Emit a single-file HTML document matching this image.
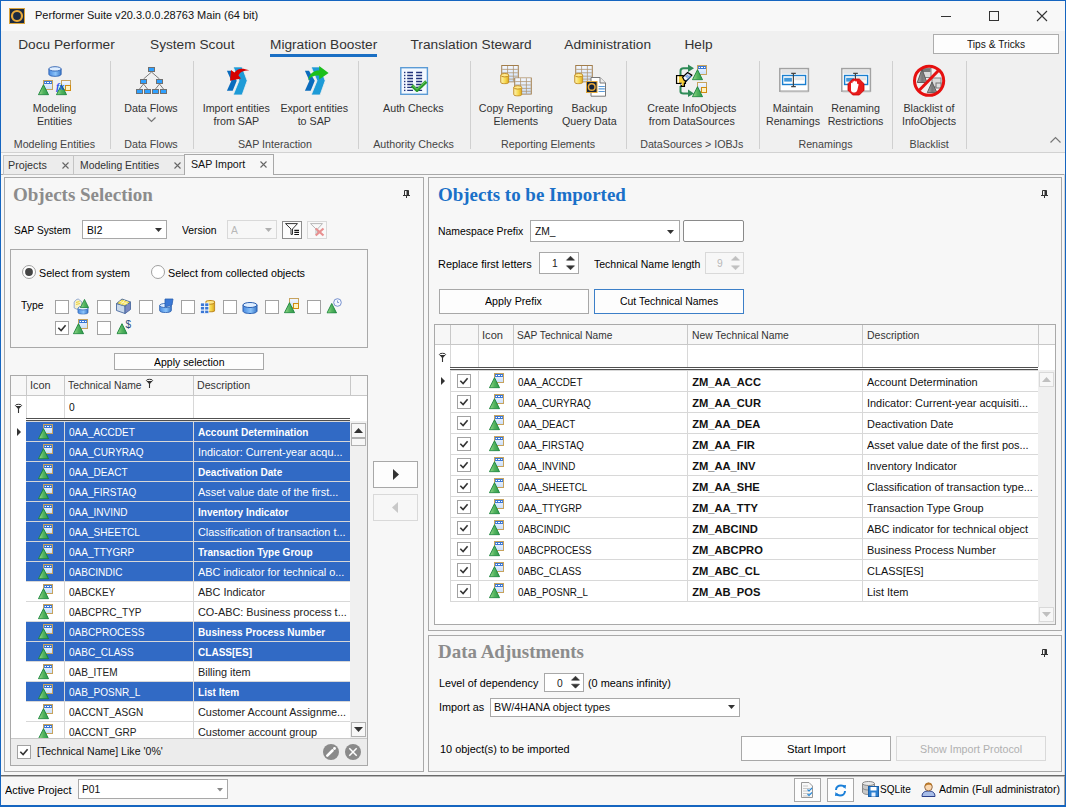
<!DOCTYPE html><html><head><meta charset="utf-8"><style>
*{margin:0;padding:0}
html,body{width:1066px;height:807px;overflow:hidden;background:#f7f7f7;position:relative}
.a{position:absolute}
.t{position:absolute;white-space:nowrap;line-height:1;font-family:"Liberation Sans",sans-serif}
svg{overflow:visible}
</style></head><body>
<svg width="0" height="0" style="position:absolute"><defs>
<linearGradient id="gG" x1="0" x2="1" y1="0" y2="0"><stop offset="0" stop-color="#9ddc8f"/><stop offset="0.5" stop-color="#52b35e"/><stop offset="1" stop-color="#2f9a4a"/></linearGradient>
<linearGradient id="gY" x1="0" x2="1"><stop offset="0" stop-color="#fff6b8"/><stop offset="0.6" stop-color="#f5d64a"/><stop offset="1" stop-color="#d9a520"/></linearGradient>
<linearGradient id="gB" x1="0" x2="1"><stop offset="0" stop-color="#4a8be0"/><stop offset="0.55" stop-color="#8cc4fa"/><stop offset="1" stop-color="#3a78c8"/></linearGradient>
<linearGradient id="gGr" x1="0" x2="1"><stop offset="0" stop-color="#b0b0b0"/><stop offset="0.5" stop-color="#6a6a6a"/><stop offset="1" stop-color="#8a8a8a"/></linearGradient>
<linearGradient id="gCell" x1="0" y1="0" x2="0" y2="1"><stop offset="0" stop-color="#f4f8ff"/><stop offset="1" stop-color="#c9defa"/></linearGradient>
<symbol id="tri" viewBox="0 0 12 12"><path d="M0.5 11.5L6 0.5L11.5 11.5Z" fill="url(#gG)" stroke="#17823a" stroke-width="1" stroke-linejoin="round"/></symbol>
<symbol id="rowi" viewBox="0 0 16 16"><rect x="5.5" y="0.5" width="9" height="9" fill="url(#gCell)" stroke="#c7a35e"/><rect x="6" y="1" width="8" height="3" fill="#3b78d6"/><path d="M6.8 2.5h1.2M9 2.5h2M12 2.5h1.2" stroke="#fff" stroke-width="1.1"/><use href="#tri" x="0" y="4" width="11" height="11.5"/></symbol>
<symbol id="rowo" viewBox="0 0 16 16"><rect x="5.5" y="0.5" width="9" height="9" fill="url(#gCell)" stroke="#c7a35e"/><rect x="9.5" y="5.5" width="5" height="5" fill="#fff2c0" stroke="#d08c10"/><use href="#tri" x="0" y="4" width="11" height="11.5"/></symbol>
<symbol id="cylb" viewBox="0 0 16 12"><path d="M1 3V9C1 10.7 4.4 11.5 8 11.5C11.6 11.5 15 10.7 15 9V3" fill="url(#gB)" stroke="#2a5fb0"/><ellipse cx="8" cy="3" rx="7" ry="2.5" fill="#dfeeff" stroke="#2a5fb0"/></symbol>
<symbol id="cyly" viewBox="0 0 10 12"><path d="M0.8 2.5V10C0.8 11 2.8 11.5 5 11.5C7.2 11.5 9.2 11 9.2 10V2.5" fill="url(#gY)" stroke="#c08a20"/><ellipse cx="5" cy="2.5" rx="4.2" ry="1.8" fill="#ffe98a" stroke="#c08a20"/></symbol>
<symbol id="tbl" viewBox="0 0 18 18"><rect x="0.5" y="0.5" width="17" height="17" fill="url(#gCell)" stroke="#a07a45"/><path d="M6.5 1V17M12.5 1V17M1 4.5H17M1 8H17M1 11.5H17M1 14.5H17" stroke="#b09670" stroke-width="0.8"/></symbol>
<symbol id="tblcyl" viewBox="0 0 20 20"><use href="#tbl" x="1" y="0" width="18" height="17.5"/><use href="#cyly" x="0" y="7.5" width="9.5" height="12"/></symbol>
<symbol id="sap" viewBox="0 0 40 36"><path d="M8.9 8.7L13 8.7L18.75 18.75L14.7 28.8L8.9 28.8L13.4 18.75Z" fill="#0b6cbd"/><path d="M15.2 4.9L24.1 4.9L29.2 18.75L24.1 33L15.2 33L21 18.75Z" fill="#1e9bd7" stroke="#f0f0f0" stroke-width="0.8"/></symbol>
</defs></svg>
<div class="a" style="left:0px;top:0px;width:1066px;height:807px;background:#f7f7f7;"></div>
<div class="a" style="left:1px;top:1px;width:1064px;height:30px;background:#f8f8f8;"></div>
<svg class="a" style="left:9px;top:8px;" width="16" height="16" viewBox="0 0 16 16"><rect x="0.5" y="0.5" width="15" height="15" fill="#1b2a40" stroke="#d8a23a"/><circle cx="8" cy="8" r="5" fill="none" stroke="#e8a93a" stroke-width="2.2"/><rect x="6" y="6" width="4" height="4" fill="#1b2a40"/></svg>
<div class="t" style="left:35.00px;top:10.14px;font-size:11.17px;color:#111;font-weight:normal;font-family:'Liberation Sans', sans-serif;transform:scaleX(0.9865);transform-origin:0 0;">Performer Suite v20.3.0.0.28763 Main (64 bit)</div>
<div class="a" style="left:941px;top:16px;width:10px;height:1px;background:#333;"></div>
<div class="a" style="left:989px;top:11px;width:10px;height:10px;border:1px solid #333;box-sizing:border-box;"></div>
<svg class="a" style="left:1037px;top:11px;" width="10" height="10" viewBox="0 0 10 10"><path d="M0 0L10 10M10 0L0 10" stroke="#333" stroke-width="1.1"/></svg>
<div class="a" style="left:1px;top:31px;width:1064px;height:121px;background:#f0f0f0;"></div>
<div class="t" style="left:18.20px;top:38.20px;font-size:13.70px;color:#333;font-weight:normal;font-family:'Liberation Sans', sans-serif;">Docu Performer</div>
<div class="t" style="left:150.00px;top:38.20px;font-size:13.70px;color:#333;font-weight:normal;font-family:'Liberation Sans', sans-serif;">System Scout</div>
<div class="t" style="left:270.00px;top:38.20px;font-size:13.70px;color:#333;font-weight:normal;font-family:'Liberation Sans', sans-serif;">Migration Booster</div>
<div class="t" style="left:410.50px;top:38.20px;font-size:13.70px;color:#333;font-weight:normal;font-family:'Liberation Sans', sans-serif;">Translation Steward</div>
<div class="t" style="left:564.30px;top:38.20px;font-size:13.70px;color:#333;font-weight:normal;font-family:'Liberation Sans', sans-serif;">Administration</div>
<div class="t" style="left:684.40px;top:38.20px;font-size:13.70px;color:#333;font-weight:normal;font-family:'Liberation Sans', sans-serif;">Help</div>
<div class="a" style="left:270px;top:54px;width:107px;height:3px;background:#1a6fc4;"></div>
<div class="a" style="left:933px;top:34px;width:126px;height:20px;background:#fdfdfd;border:1px solid #adadad;box-sizing:border-box;"></div>
<div class="t" style="left:966.90px;top:38.54px;font-size:11.17px;color:#111;font-weight:normal;font-family:'Liberation Sans', sans-serif;transform:scaleX(0.9146);transform-origin:0 0;">Tips &amp; Tricks</div>
<div class="a" style="left:110px;top:61px;width:1px;height:88px;background:#d0d0d0;"></div>
<div class="a" style="left:193px;top:61px;width:1px;height:88px;background:#d0d0d0;"></div>
<div class="a" style="left:358px;top:61px;width:1px;height:88px;background:#d0d0d0;"></div>
<div class="a" style="left:470px;top:61px;width:1px;height:88px;background:#d0d0d0;"></div>
<div class="a" style="left:626px;top:61px;width:1px;height:88px;background:#d0d0d0;"></div>
<div class="a" style="left:759px;top:61px;width:1px;height:88px;background:#d0d0d0;"></div>
<div class="a" style="left:892px;top:61px;width:1px;height:88px;background:#d0d0d0;"></div>
<div class="a" style="left:966px;top:61px;width:1px;height:88px;background:#d0d0d0;"></div>
<div class="t" style="left:32.79px;top:103.14px;font-size:10.70px;color:#333;font-weight:normal;font-family:'Liberation Sans', sans-serif;">Modeling</div>
<div class="t" style="left:36.96px;top:116.14px;font-size:10.70px;color:#333;font-weight:normal;font-family:'Liberation Sans', sans-serif;">Entities</div>
<div class="t" style="left:124.24px;top:103.14px;font-size:10.70px;color:#333;font-weight:normal;font-family:'Liberation Sans', sans-serif;">Data Flows</div>
<div class="t" style="left:202.70px;top:103.14px;font-size:10.70px;color:#333;font-weight:normal;font-family:'Liberation Sans', sans-serif;">Import entities</div>
<div class="t" style="left:213.41px;top:116.14px;font-size:10.70px;color:#333;font-weight:normal;font-family:'Liberation Sans', sans-serif;">from SAP</div>
<div class="t" style="left:280.40px;top:103.14px;font-size:10.70px;color:#333;font-weight:normal;font-family:'Liberation Sans', sans-serif;">Export entities</div>
<div class="t" style="left:297.65px;top:116.14px;font-size:10.70px;color:#333;font-weight:normal;font-family:'Liberation Sans', sans-serif;">to SAP</div>
<div class="t" style="left:383.07px;top:103.14px;font-size:10.70px;color:#333;font-weight:normal;font-family:'Liberation Sans', sans-serif;">Auth Checks</div>
<div class="t" style="left:478.73px;top:103.14px;font-size:10.70px;color:#333;font-weight:normal;font-family:'Liberation Sans', sans-serif;">Copy Reporting</div>
<div class="t" style="left:493.60px;top:116.14px;font-size:10.70px;color:#333;font-weight:normal;font-family:'Liberation Sans', sans-serif;">Elements</div>
<div class="t" style="left:571.46px;top:103.14px;font-size:10.70px;color:#333;font-weight:normal;font-family:'Liberation Sans', sans-serif;">Backup</div>
<div class="t" style="left:561.95px;top:116.14px;font-size:10.70px;color:#333;font-weight:normal;font-family:'Liberation Sans', sans-serif;">Query Data</div>
<div class="t" style="left:647.20px;top:103.14px;font-size:10.70px;color:#333;font-weight:normal;font-family:'Liberation Sans', sans-serif;">Create InfoObjects</div>
<div class="t" style="left:648.69px;top:116.14px;font-size:10.70px;color:#333;font-weight:normal;font-family:'Liberation Sans', sans-serif;">from DataSources</div>
<div class="t" style="left:772.78px;top:103.14px;font-size:10.70px;color:#333;font-weight:normal;font-family:'Liberation Sans', sans-serif;">Maintain</div>
<div class="t" style="left:765.94px;top:116.14px;font-size:10.70px;color:#333;font-weight:normal;font-family:'Liberation Sans', sans-serif;">Renamings</div>
<div class="t" style="left:831.22px;top:103.14px;font-size:10.70px;color:#333;font-weight:normal;font-family:'Liberation Sans', sans-serif;">Renaming</div>
<div class="t" style="left:827.65px;top:116.14px;font-size:10.70px;color:#333;font-weight:normal;font-family:'Liberation Sans', sans-serif;">Restrictions</div>
<div class="t" style="left:903.43px;top:103.14px;font-size:10.70px;color:#333;font-weight:normal;font-family:'Liberation Sans', sans-serif;">Blacklist of</div>
<div class="t" style="left:901.94px;top:116.14px;font-size:10.70px;color:#333;font-weight:normal;font-family:'Liberation Sans', sans-serif;">InfoObjects</div>
<div class="t" style="left:13.76px;top:138.94px;font-size:10.70px;color:#444;font-weight:normal;font-family:'Liberation Sans', sans-serif;">Modeling Entities</div>
<div class="t" style="left:124.24px;top:138.94px;font-size:10.70px;color:#444;font-weight:normal;font-family:'Liberation Sans', sans-serif;">Data Flows</div>
<div class="t" style="left:237.93px;top:138.94px;font-size:10.70px;color:#444;font-weight:normal;font-family:'Liberation Sans', sans-serif;">SAP Interaction</div>
<div class="t" style="left:373.16px;top:138.94px;font-size:10.70px;color:#444;font-weight:normal;font-family:'Liberation Sans', sans-serif;">Authority Checks</div>
<div class="t" style="left:501.12px;top:138.94px;font-size:10.70px;color:#444;font-weight:normal;font-family:'Liberation Sans', sans-serif;">Reporting Elements</div>
<div class="t" style="left:640.21px;top:138.94px;font-size:10.70px;color:#444;font-weight:normal;font-family:'Liberation Sans', sans-serif;">DataSources &gt; IOBJs</div>
<div class="t" style="left:798.44px;top:138.94px;font-size:10.70px;color:#444;font-weight:normal;font-family:'Liberation Sans', sans-serif;">Renamings</div>
<div class="t" style="left:909.58px;top:138.94px;font-size:10.70px;color:#444;font-weight:normal;font-family:'Liberation Sans', sans-serif;">Blacklist</div>
<svg class="a" style="left:147px;top:117px;" width="9" height="5" viewBox="0 0 9 5"><path d="M0.5 0.5L4.5 4.5L8.5 0.5" fill="none" stroke="#777" stroke-width="1.2"/></svg>
<svg class="a" style="left:1050px;top:137px;" width="11" height="6" viewBox="0 0 11 6"><path d="M0.5 5.5L5.5 0.5L10.5 5.5" fill="none" stroke="#777" stroke-width="1.2"/></svg>
<div class="a" style="left:1px;top:152px;width:1064px;height:1px;background:#d2d2d2;"></div>
<div class="a" style="left:1px;top:174px;width:1064px;height:1px;background:#a8a8a8;"></div>
<div class="a" style="left:3px;top:155px;width:71px;height:20px;background:#ececec;border:1px solid #c4c4c4;box-sizing:border-box;"></div>
<div class="a" style="left:73px;top:155px;width:112px;height:20px;background:#ececec;border:1px solid #c4c4c4;box-sizing:border-box;"></div>
<div class="a" style="left:184px;top:154px;width:90px;height:21px;background:#f7f7f7;border:1px solid #a8a8a8;box-sizing:border-box;border-bottom:none;"></div>
<div class="t" style="left:8.40px;top:159.64px;font-size:11.17px;color:#333;font-weight:normal;font-family:'Liberation Sans', sans-serif;transform:scaleX(0.9638);transform-origin:0 0;">Projects</div>
<div class="t" style="left:79.70px;top:159.64px;font-size:11.17px;color:#333;font-weight:normal;font-family:'Liberation Sans', sans-serif;transform:scaleX(0.9320);transform-origin:0 0;">Modeling Entities</div>
<div class="t" style="left:191.40px;top:159.14px;font-size:11.17px;color:#111;font-weight:normal;font-family:'Liberation Sans', sans-serif;transform:scaleX(0.9539);transform-origin:0 0;">SAP Import</div>
<svg class="a" style="left:61.5px;top:161.5px;" width="7" height="7" viewBox="0 0 7 7"><path d="M0.5 0.5L6.5 6.5M6.5 0.5L0.5 6.5" stroke="#666" stroke-width="1.1"/></svg>
<svg class="a" style="left:173.5px;top:161.5px;" width="7" height="7" viewBox="0 0 7 7"><path d="M0.5 0.5L6.5 6.5M6.5 0.5L0.5 6.5" stroke="#666" stroke-width="1.1"/></svg>
<svg class="a" style="left:259.5px;top:161.0px;" width="7" height="7" viewBox="0 0 7 7"><path d="M0.5 0.5L6.5 6.5M6.5 0.5L0.5 6.5" stroke="#666" stroke-width="1.1"/></svg>
<div class="a" style="left:4px;top:177px;width:420px;height:595px;border:1px solid #a9a9a9;box-sizing:border-box;"></div>
<div class="t" style="left:13.40px;top:185.87px;font-size:18.78px;color:#8c8c8c;font-weight:bold;font-family:'Liberation Serif', serif;transform:scaleX(1.0130);transform-origin:0 0;">Objects Selection</div>
<svg class="a" style="left:403px;top:190px;" width="8" height="9" viewBox="0 0 8 9"><path d="M1.5 0.5H5.5V5.5H1.5Z" fill="none" stroke="#333" stroke-width="1"/><rect x="3.5" y="0.5" width="2" height="5" fill="#333"/><path d="M0 5.5H7M3.5 5.5V8" stroke="#333" stroke-width="1"/></svg>
<div class="t" style="left:14.40px;top:224.54px;font-size:11.17px;color:#000;font-weight:normal;font-family:'Liberation Sans', sans-serif;transform:scaleX(0.9086);transform-origin:0 0;">SAP System</div>
<div class="a" style="left:82px;top:220px;width:85px;height:19px;background:#fff;border:1px solid #a8a8a8;box-sizing:border-box;"></div>
<div class="t" style="left:86.50px;top:224.54px;font-size:11.17px;color:#000;font-weight:normal;font-family:'Liberation Sans', sans-serif;transform:scaleX(0.9200);transform-origin:0 0;">BI2</div>
<svg class="a" style="left:154.5px;top:228px;" width="7" height="4" viewBox="0 0 7 4"><path d="M0 0H7L3.5 4Z" fill="#333"/></svg>
<div class="t" style="left:181.50px;top:224.54px;font-size:11.17px;color:#000;font-weight:normal;font-family:'Liberation Sans', sans-serif;transform:scaleX(0.9285);transform-origin:0 0;">Version</div>
<div class="a" style="left:227px;top:220px;width:50px;height:19px;background:#f7f7f7;border:1px solid #d9d9d9;box-sizing:border-box;"></div>
<div class="t" style="left:231.00px;top:224.54px;font-size:11.17px;color:#b8b8b8;font-weight:normal;font-family:'Liberation Sans', sans-serif;transform:scaleX(0.9200);transform-origin:0 0;">A</div>
<svg class="a" style="left:264.5px;top:228px;" width="7" height="4" viewBox="0 0 7 4"><path d="M0 0H7L3.5 4Z" fill="#b0b0b0"/></svg>
<div class="a" style="left:282px;top:221px;width:20px;height:18px;background:#fdfdfd;border:1px solid #8c8c8c;box-sizing:border-box;"></div>
<svg class="a" style="left:282px;top:221px;" width="20" height="18" viewBox="0 0 20 18"><path d="M3.5 2.6H15.5L10.5 8V13.4H9V8Z" fill="none" stroke="#333" stroke-width="1"/><path d="M12.3 9.4H17M12.3 11.4H17M12.3 13.5H17" stroke="#111" stroke-width="1.1"/></svg>
<div class="a" style="left:307px;top:221px;width:20px;height:18px;background:#f9f9f9;border:1px solid #d9d9d9;box-sizing:border-box;"></div>
<svg class="a" style="left:307px;top:221px;" width="20" height="18" viewBox="0 0 20 18"><path d="M3.5 2.6H15.5L10.5 8V13.4H9V8Z" fill="none" stroke="#b8b8b8" stroke-width="1"/><path d="M8.7 7.5L16.5 14.5M16.5 7.5L8.7 14.5" stroke="#e89090" stroke-width="2.2"/></svg>
<div class="a" style="left:10px;top:249px;width:358px;height:99px;border:1px solid #a9a9a9;box-sizing:border-box;"></div>
<svg class="a" style="left:22px;top:265px;" width="14" height="14" viewBox="0 0 14 14"><circle cx="7" cy="7" r="6.5" fill="#fff" stroke="#a0a0a0"/><circle cx="7" cy="7" r="3.9" fill="#444"/></svg>
<div class="t" style="left:39.20px;top:267.54px;font-size:11.17px;color:#000;font-weight:normal;font-family:'Liberation Sans', sans-serif;transform:scaleX(0.9580);transform-origin:0 0;">Select from system</div>
<svg class="a" style="left:151px;top:265px;" width="14" height="14" viewBox="0 0 14 14"><circle cx="7" cy="7" r="6.5" fill="#fff" stroke="#a0a0a0"/></svg>
<div class="t" style="left:168.30px;top:267.54px;font-size:11.17px;color:#000;font-weight:normal;font-family:'Liberation Sans', sans-serif;transform:scaleX(0.9648);transform-origin:0 0;">Select from collected objects</div>
<div class="t" style="left:21.40px;top:300.04px;font-size:11.17px;color:#000;font-weight:normal;font-family:'Liberation Sans', sans-serif;transform:scaleX(0.9300);transform-origin:0 0;">Type</div>
<svg class="a" style="left:55px;top:300px;" width="14" height="14" viewBox="0 0 14 14"><rect x="0.5" y="0.5" width="13" height="13" fill="#fff" stroke="#a2a2a2"/></svg>
<svg class="a" style="left:97px;top:300px;" width="14" height="14" viewBox="0 0 14 14"><rect x="0.5" y="0.5" width="13" height="13" fill="#fff" stroke="#a2a2a2"/></svg>
<svg class="a" style="left:139px;top:300px;" width="14" height="14" viewBox="0 0 14 14"><rect x="0.5" y="0.5" width="13" height="13" fill="#fff" stroke="#a2a2a2"/></svg>
<svg class="a" style="left:181px;top:300px;" width="14" height="14" viewBox="0 0 14 14"><rect x="0.5" y="0.5" width="13" height="13" fill="#fff" stroke="#a2a2a2"/></svg>
<svg class="a" style="left:223px;top:300px;" width="14" height="14" viewBox="0 0 14 14"><rect x="0.5" y="0.5" width="13" height="13" fill="#fff" stroke="#a2a2a2"/></svg>
<svg class="a" style="left:265px;top:300px;" width="14" height="14" viewBox="0 0 14 14"><rect x="0.5" y="0.5" width="13" height="13" fill="#fff" stroke="#a2a2a2"/></svg>
<svg class="a" style="left:307px;top:300px;" width="14" height="14" viewBox="0 0 14 14"><rect x="0.5" y="0.5" width="13" height="13" fill="#fff" stroke="#a2a2a2"/></svg>
<svg class="a" style="left:55px;top:321px;" width="14" height="14" viewBox="0 0 14 14"><rect x="0.5" y="0.5" width="13" height="13" fill="#fff" stroke="#a2a2a2"/><path d="M3.3 6.8L6.1 9.6L10.6 4.2" fill="none" stroke="#333" stroke-width="1.6"/></svg>
<svg class="a" style="left:97px;top:321px;" width="14" height="14" viewBox="0 0 14 14"><rect x="0.5" y="0.5" width="13" height="13" fill="#fff" stroke="#a2a2a2"/></svg>
<div class="a" style="left:114px;top:353px;width:150px;height:17px;background:#fdfdfd;border:1px solid #a8a8a8;box-sizing:border-box;"></div>
<div class="t" style="left:153.70px;top:356.54px;font-size:11.17px;color:#000;font-weight:normal;font-family:'Liberation Sans', sans-serif;transform:scaleX(0.9395);transform-origin:0 0;">Apply selection</div>
<div class="a" style="left:10px;top:375px;width:358px;height:391px;background:#fff;border:1px solid #a9a9a9;box-sizing:border-box;"></div>
<div class="a" style="left:11px;top:376px;width:356px;height:19px;background:#f7f7f7;"></div>
<div class="a" style="left:11px;top:395px;width:356px;height:1px;background:#c8c8c8;"></div>
<div class="a" style="left:26px;top:376px;width:1px;height:19px;background:#c8c8c8;"></div>
<div class="a" style="left:64px;top:376px;width:1px;height:19px;background:#c8c8c8;"></div>
<div class="a" style="left:193px;top:376px;width:1px;height:19px;background:#c8c8c8;"></div>
<div class="a" style="left:350px;top:376px;width:1px;height:19px;background:#c8c8c8;"></div>
<div class="a" style="left:26px;top:396px;width:1px;height:22px;background:#d8d8d8;"></div>
<div class="a" style="left:64px;top:396px;width:1px;height:22px;background:#d8d8d8;"></div>
<div class="a" style="left:193px;top:396px;width:1px;height:22px;background:#d8d8d8;"></div>
<div class="t" style="left:30.30px;top:380.24px;font-size:11.17px;color:#333;font-weight:normal;font-family:'Liberation Sans', sans-serif;transform:scaleX(0.9802);transform-origin:0 0;">Icon</div>
<div class="t" style="left:68.40px;top:380.24px;font-size:11.17px;color:#333;font-weight:normal;font-family:'Liberation Sans', sans-serif;transform:scaleX(0.9260);transform-origin:0 0;">Technical Name</div>
<div class="t" style="left:196.80px;top:380.24px;font-size:11.17px;color:#333;font-weight:normal;font-family:'Liberation Sans', sans-serif;transform:scaleX(0.9520);transform-origin:0 0;">Description</div>
<svg class="a" style="left:146px;top:379px;" width="7" height="9" viewBox="0 0 7 9"><ellipse cx="3.5" cy="1.5" rx="3.1" ry="1.2" fill="none" stroke="#333" stroke-width="1"/><path d="M0.6 2L3.5 5.5L6.4 2Z" fill="#333"/><path d="M3.5 5V9" stroke="#333" stroke-width="1.1"/></svg>
<svg class="a" style="left:15px;top:404px;" width="7" height="9" viewBox="0 0 7 9"><ellipse cx="3.5" cy="1.5" rx="3.1" ry="1.2" fill="none" stroke="#333" stroke-width="1"/><path d="M0.6 2L3.5 5.5L6.4 2Z" fill="#333"/><path d="M3.5 5V9" stroke="#333" stroke-width="1.1"/></svg>
<div class="t" style="left:69.00px;top:401.54px;font-size:11.17px;color:#111;font-weight:normal;font-family:'Liberation Sans', sans-serif;transform:scaleX(0.9200);transform-origin:0 0;">0</div>
<div class="a" style="left:26px;top:418px;width:324px;height:1px;background:#505050;"></div>
<div class="a" style="left:26px;top:420px;width:324px;height:1px;background:#505050;"></div>
<div class="a" style="left:26px;top:421px;width:324px;height:317px;overflow:hidden">
<div class="a" style="left:0px;top:0px;width:324px;height:1px;background:#d8d8d8;"></div>
<div class="a" style="left:0px;top:1px;width:324px;height:19px;background:#316ac5;"></div>
<div class="a" style="left:0px;top:20px;width:324px;height:1px;background:#d8d8d8;"></div>
<div class="a" style="left:38px;top:1px;width:1px;height:19px;background:#d8d8d8;"></div>
<div class="a" style="left:167px;top:1px;width:1px;height:19px;background:#d8d8d8;"></div>
<div class="t" style="left:42.90px;top:6.34px;font-size:11.17px;color:#fff;font-weight:normal;font-family:'Liberation Sans', sans-serif;transform:scaleX(0.9000);transform-origin:0 0;">0AA_ACCDET</div>
<div class="t" style="left:172.00px;top:6.34px;font-size:11.17px;color:#fff;font-weight:bold;font-family:'Liberation Sans', sans-serif;transform:scaleX(0.9000);transform-origin:0 0;">Account Determination</div>
<div class="a" style="left:0px;top:21px;width:324px;height:19px;background:#316ac5;"></div>
<div class="a" style="left:0px;top:40px;width:324px;height:1px;background:#d8d8d8;"></div>
<div class="a" style="left:38px;top:21px;width:1px;height:19px;background:#d8d8d8;"></div>
<div class="a" style="left:167px;top:21px;width:1px;height:19px;background:#d8d8d8;"></div>
<div class="t" style="left:42.90px;top:26.34px;font-size:11.17px;color:#fff;font-weight:normal;font-family:'Liberation Sans', sans-serif;transform:scaleX(0.9000);transform-origin:0 0;">0AA_CURYRAQ</div>
<div class="t" style="left:172.00px;top:26.34px;font-size:11.17px;color:#fff;font-weight:normal;font-family:'Liberation Sans', sans-serif;transform:scaleX(0.9750);transform-origin:0 0;">Indicator: Current-year acqu...</div>
<div class="a" style="left:0px;top:41px;width:324px;height:19px;background:#316ac5;"></div>
<div class="a" style="left:0px;top:60px;width:324px;height:1px;background:#d8d8d8;"></div>
<div class="a" style="left:38px;top:41px;width:1px;height:19px;background:#d8d8d8;"></div>
<div class="a" style="left:167px;top:41px;width:1px;height:19px;background:#d8d8d8;"></div>
<div class="t" style="left:42.90px;top:46.34px;font-size:11.17px;color:#fff;font-weight:normal;font-family:'Liberation Sans', sans-serif;transform:scaleX(0.9000);transform-origin:0 0;">0AA_DEACT</div>
<div class="t" style="left:172.00px;top:46.34px;font-size:11.17px;color:#fff;font-weight:bold;font-family:'Liberation Sans', sans-serif;transform:scaleX(0.9000);transform-origin:0 0;">Deactivation Date</div>
<div class="a" style="left:0px;top:61px;width:324px;height:19px;background:#316ac5;"></div>
<div class="a" style="left:0px;top:80px;width:324px;height:1px;background:#d8d8d8;"></div>
<div class="a" style="left:38px;top:61px;width:1px;height:19px;background:#d8d8d8;"></div>
<div class="a" style="left:167px;top:61px;width:1px;height:19px;background:#d8d8d8;"></div>
<div class="t" style="left:42.90px;top:66.34px;font-size:11.17px;color:#fff;font-weight:normal;font-family:'Liberation Sans', sans-serif;transform:scaleX(0.9000);transform-origin:0 0;">0AA_FIRSTAQ</div>
<div class="t" style="left:172.00px;top:66.34px;font-size:11.17px;color:#fff;font-weight:normal;font-family:'Liberation Sans', sans-serif;transform:scaleX(0.9750);transform-origin:0 0;">Asset value date of the first...</div>
<div class="a" style="left:0px;top:81px;width:324px;height:19px;background:#316ac5;"></div>
<div class="a" style="left:0px;top:100px;width:324px;height:1px;background:#d8d8d8;"></div>
<div class="a" style="left:38px;top:81px;width:1px;height:19px;background:#d8d8d8;"></div>
<div class="a" style="left:167px;top:81px;width:1px;height:19px;background:#d8d8d8;"></div>
<div class="t" style="left:42.90px;top:86.34px;font-size:11.17px;color:#fff;font-weight:normal;font-family:'Liberation Sans', sans-serif;transform:scaleX(0.9000);transform-origin:0 0;">0AA_INVIND</div>
<div class="t" style="left:172.00px;top:86.34px;font-size:11.17px;color:#fff;font-weight:bold;font-family:'Liberation Sans', sans-serif;transform:scaleX(0.9000);transform-origin:0 0;">Inventory Indicator</div>
<div class="a" style="left:0px;top:101px;width:324px;height:19px;background:#316ac5;"></div>
<div class="a" style="left:0px;top:120px;width:324px;height:1px;background:#d8d8d8;"></div>
<div class="a" style="left:38px;top:101px;width:1px;height:19px;background:#d8d8d8;"></div>
<div class="a" style="left:167px;top:101px;width:1px;height:19px;background:#d8d8d8;"></div>
<div class="t" style="left:42.90px;top:106.34px;font-size:11.17px;color:#fff;font-weight:normal;font-family:'Liberation Sans', sans-serif;transform:scaleX(0.9000);transform-origin:0 0;">0AA_SHEETCL</div>
<div class="t" style="left:172.00px;top:106.34px;font-size:11.17px;color:#fff;font-weight:normal;font-family:'Liberation Sans', sans-serif;transform:scaleX(0.9750);transform-origin:0 0;">Classification of transaction t...</div>
<div class="a" style="left:0px;top:121px;width:324px;height:19px;background:#316ac5;"></div>
<div class="a" style="left:0px;top:140px;width:324px;height:1px;background:#d8d8d8;"></div>
<div class="a" style="left:38px;top:121px;width:1px;height:19px;background:#d8d8d8;"></div>
<div class="a" style="left:167px;top:121px;width:1px;height:19px;background:#d8d8d8;"></div>
<div class="t" style="left:42.90px;top:126.34px;font-size:11.17px;color:#fff;font-weight:normal;font-family:'Liberation Sans', sans-serif;transform:scaleX(0.9000);transform-origin:0 0;">0AA_TTYGRP</div>
<div class="t" style="left:172.00px;top:126.34px;font-size:11.17px;color:#fff;font-weight:bold;font-family:'Liberation Sans', sans-serif;transform:scaleX(0.9000);transform-origin:0 0;">Transaction Type Group</div>
<div class="a" style="left:0px;top:141px;width:324px;height:19px;background:#316ac5;"></div>
<div class="a" style="left:0px;top:160px;width:324px;height:1px;background:#d8d8d8;"></div>
<div class="a" style="left:38px;top:141px;width:1px;height:19px;background:#d8d8d8;"></div>
<div class="a" style="left:167px;top:141px;width:1px;height:19px;background:#d8d8d8;"></div>
<div class="t" style="left:42.90px;top:146.34px;font-size:11.17px;color:#fff;font-weight:normal;font-family:'Liberation Sans', sans-serif;transform:scaleX(0.9000);transform-origin:0 0;">0ABCINDIC</div>
<div class="t" style="left:172.00px;top:146.34px;font-size:11.17px;color:#fff;font-weight:normal;font-family:'Liberation Sans', sans-serif;transform:scaleX(0.9750);transform-origin:0 0;">ABC indicator for technical o...</div>
<div class="a" style="left:0px;top:180px;width:324px;height:1px;background:#d8d8d8;"></div>
<div class="a" style="left:38px;top:161px;width:1px;height:19px;background:#d8d8d8;"></div>
<div class="a" style="left:167px;top:161px;width:1px;height:19px;background:#d8d8d8;"></div>
<div class="t" style="left:42.90px;top:166.34px;font-size:11.17px;color:#222;font-weight:normal;font-family:'Liberation Sans', sans-serif;transform:scaleX(0.9000);transform-origin:0 0;">0ABCKEY</div>
<div class="t" style="left:172.00px;top:166.34px;font-size:11.17px;color:#222;font-weight:normal;font-family:'Liberation Sans', sans-serif;transform:scaleX(0.9750);transform-origin:0 0;">ABC Indicator</div>
<div class="a" style="left:0px;top:200px;width:324px;height:1px;background:#d8d8d8;"></div>
<div class="a" style="left:38px;top:181px;width:1px;height:19px;background:#d8d8d8;"></div>
<div class="a" style="left:167px;top:181px;width:1px;height:19px;background:#d8d8d8;"></div>
<div class="t" style="left:42.90px;top:186.34px;font-size:11.17px;color:#222;font-weight:normal;font-family:'Liberation Sans', sans-serif;transform:scaleX(0.9000);transform-origin:0 0;">0ABCPRC_TYP</div>
<div class="t" style="left:172.00px;top:186.34px;font-size:11.17px;color:#222;font-weight:normal;font-family:'Liberation Sans', sans-serif;transform:scaleX(0.9750);transform-origin:0 0;">CO-ABC: Business process t...</div>
<div class="a" style="left:0px;top:201px;width:324px;height:19px;background:#316ac5;"></div>
<div class="a" style="left:0px;top:220px;width:324px;height:1px;background:#d8d8d8;"></div>
<div class="a" style="left:38px;top:201px;width:1px;height:19px;background:#d8d8d8;"></div>
<div class="a" style="left:167px;top:201px;width:1px;height:19px;background:#d8d8d8;"></div>
<div class="t" style="left:42.90px;top:206.34px;font-size:11.17px;color:#fff;font-weight:normal;font-family:'Liberation Sans', sans-serif;transform:scaleX(0.9000);transform-origin:0 0;">0ABCPROCESS</div>
<div class="t" style="left:172.00px;top:206.34px;font-size:11.17px;color:#fff;font-weight:bold;font-family:'Liberation Sans', sans-serif;transform:scaleX(0.9000);transform-origin:0 0;">Business Process Number</div>
<div class="a" style="left:0px;top:221px;width:324px;height:19px;background:#316ac5;"></div>
<div class="a" style="left:0px;top:240px;width:324px;height:1px;background:#d8d8d8;"></div>
<div class="a" style="left:38px;top:221px;width:1px;height:19px;background:#d8d8d8;"></div>
<div class="a" style="left:167px;top:221px;width:1px;height:19px;background:#d8d8d8;"></div>
<div class="t" style="left:42.90px;top:226.34px;font-size:11.17px;color:#fff;font-weight:normal;font-family:'Liberation Sans', sans-serif;transform:scaleX(0.9000);transform-origin:0 0;">0ABC_CLASS</div>
<div class="t" style="left:172.00px;top:226.34px;font-size:11.17px;color:#fff;font-weight:bold;font-family:'Liberation Sans', sans-serif;transform:scaleX(0.9000);transform-origin:0 0;">CLASS[ES]</div>
<div class="a" style="left:0px;top:260px;width:324px;height:1px;background:#d8d8d8;"></div>
<div class="a" style="left:38px;top:241px;width:1px;height:19px;background:#d8d8d8;"></div>
<div class="a" style="left:167px;top:241px;width:1px;height:19px;background:#d8d8d8;"></div>
<div class="t" style="left:42.90px;top:246.34px;font-size:11.17px;color:#222;font-weight:normal;font-family:'Liberation Sans', sans-serif;transform:scaleX(0.9000);transform-origin:0 0;">0AB_ITEM</div>
<div class="t" style="left:172.00px;top:246.34px;font-size:11.17px;color:#222;font-weight:normal;font-family:'Liberation Sans', sans-serif;transform:scaleX(0.9750);transform-origin:0 0;">Billing item</div>
<div class="a" style="left:0px;top:261px;width:324px;height:19px;background:#316ac5;"></div>
<div class="a" style="left:0px;top:280px;width:324px;height:1px;background:#d8d8d8;"></div>
<div class="a" style="left:38px;top:261px;width:1px;height:19px;background:#d8d8d8;"></div>
<div class="a" style="left:167px;top:261px;width:1px;height:19px;background:#d8d8d8;"></div>
<div class="t" style="left:42.90px;top:266.34px;font-size:11.17px;color:#fff;font-weight:normal;font-family:'Liberation Sans', sans-serif;transform:scaleX(0.9000);transform-origin:0 0;">0AB_POSNR_L</div>
<div class="t" style="left:172.00px;top:266.34px;font-size:11.17px;color:#fff;font-weight:bold;font-family:'Liberation Sans', sans-serif;transform:scaleX(0.9000);transform-origin:0 0;">List Item</div>
<div class="a" style="left:0px;top:300px;width:324px;height:1px;background:#d8d8d8;"></div>
<div class="a" style="left:38px;top:281px;width:1px;height:19px;background:#d8d8d8;"></div>
<div class="a" style="left:167px;top:281px;width:1px;height:19px;background:#d8d8d8;"></div>
<div class="t" style="left:42.90px;top:286.34px;font-size:11.17px;color:#222;font-weight:normal;font-family:'Liberation Sans', sans-serif;transform:scaleX(0.9000);transform-origin:0 0;">0ACCNT_ASGN</div>
<div class="t" style="left:172.00px;top:286.34px;font-size:11.17px;color:#222;font-weight:normal;font-family:'Liberation Sans', sans-serif;transform:scaleX(0.9750);transform-origin:0 0;">Customer Account Assignme...</div>
<div class="a" style="left:0px;top:320px;width:324px;height:1px;background:#d8d8d8;"></div>
<div class="a" style="left:38px;top:301px;width:1px;height:19px;background:#d8d8d8;"></div>
<div class="a" style="left:167px;top:301px;width:1px;height:19px;background:#d8d8d8;"></div>
<div class="t" style="left:42.90px;top:306.34px;font-size:11.17px;color:#222;font-weight:normal;font-family:'Liberation Sans', sans-serif;transform:scaleX(0.9000);transform-origin:0 0;">0ACCNT_GRP</div>
<div class="t" style="left:172.00px;top:306.34px;font-size:11.17px;color:#222;font-weight:normal;font-family:'Liberation Sans', sans-serif;transform:scaleX(0.9750);transform-origin:0 0;">Customer account group</div>
</div>
<svg class="a" style="left:17px;top:428px;" width="4" height="8" viewBox="0 0 4 8"><path d="M0 0L4 4L0 8Z" fill="#333"/></svg>
<div class="a" style="left:350px;top:421px;width:17px;height:317px;background:#f0f0f0;"></div>
<div class="a" style="left:351px;top:423px;width:15px;height:15px;background:#f7f7f7;border:1px solid #b0b0b0;box-sizing:border-box;"></div>
<svg class="a" style="left:354px;top:428px;" width="9" height="5" viewBox="0 0 9 5"><path d="M0 5H9L4.5 0Z" fill="#333"/></svg>
<div class="a" style="left:351px;top:438px;width:15px;height:8px;background:#f7f7f7;border:1px solid #b0b0b0;box-sizing:border-box;"></div>
<div class="a" style="left:351px;top:722px;width:15px;height:15px;background:#f7f7f7;border:1px solid #b0b0b0;box-sizing:border-box;"></div>
<svg class="a" style="left:354px;top:727px;" width="9" height="5" viewBox="0 0 9 5"><path d="M0 0H9L4.5 5Z" fill="#333"/></svg>
<div class="a" style="left:11px;top:738px;width:356px;height:27px;background:#ececec;"></div>
<div class="a" style="left:11px;top:738px;width:356px;height:1px;background:#c8c8c8;"></div>
<svg class="a" style="left:17px;top:745px;" width="14" height="14" viewBox="0 0 14 14"><rect x="0.5" y="0.5" width="13" height="13" fill="#fff" stroke="#a2a2a2"/><path d="M3.3 6.8L6.1 9.6L10.6 4.2" fill="none" stroke="#333" stroke-width="1.6"/></svg>
<div class="t" style="left:37.20px;top:746.04px;font-size:11.17px;color:#111;font-weight:normal;font-family:'Liberation Sans', sans-serif;transform:scaleX(0.9487);transform-origin:0 0;">[Technical Name] Like '0%'</div>
<svg class="a" style="left:323px;top:744px;" width="16" height="16" viewBox="0 0 16 16"><circle cx="8" cy="8" r="8" fill="#8a8a8a"/><path d="M4.3 11.7L9.5 6.5" stroke="#fff" stroke-width="2.6" stroke-linecap="round"/><circle cx="11.5" cy="4.5" r="1.4" fill="#fff"/></svg>
<svg class="a" style="left:345px;top:744px;" width="16" height="16" viewBox="0 0 16 16"><circle cx="8" cy="8" r="8" fill="#8a8a8a"/><path d="M4.3 4.3L11.7 11.7M11.7 4.3L4.3 11.7" stroke="#fff" stroke-width="1.5"/></svg>
<div class="a" style="left:373px;top:461px;width:45px;height:27px;background:#fdfdfd;border:1px solid #a8a8a8;box-sizing:border-box;"></div>
<svg class="a" style="left:393px;top:469px;" width="6" height="11" viewBox="0 0 6 11"><path d="M0 0L6 5.5L0 11Z" fill="#333"/></svg>
<div class="a" style="left:373px;top:494px;width:45px;height:27px;background:#f7f7f7;border:1px solid #d9d9d9;box-sizing:border-box;"></div>
<svg class="a" style="left:392px;top:502px;" width="6" height="11" viewBox="0 0 6 11"><path d="M6 0L0 5.5L6 11Z" fill="#c8c8c8"/></svg>
<div class="a" style="left:428px;top:177px;width:634px;height:454px;border:1px solid #a9a9a9;box-sizing:border-box;"></div>
<div class="t" style="left:437.70px;top:185.87px;font-size:18.78px;color:#1a70c8;font-weight:bold;font-family:'Liberation Serif', serif;transform:scaleX(1.0097);transform-origin:0 0;">Objects to be Imported</div>
<svg class="a" style="left:1041px;top:190px;" width="8" height="9" viewBox="0 0 8 9"><path d="M1.5 0.5H5.5V5.5H1.5Z" fill="none" stroke="#333" stroke-width="1"/><rect x="3.5" y="0.5" width="2" height="5" fill="#333"/><path d="M0 5.5H7M3.5 5.5V8" stroke="#333" stroke-width="1"/></svg>
<div class="t" style="left:438.40px;top:226.24px;font-size:11.17px;color:#000;font-weight:normal;font-family:'Liberation Sans', sans-serif;transform:scaleX(0.9356);transform-origin:0 0;">Namespace Prefix</div>
<div class="a" style="left:530px;top:220px;width:150px;height:22px;background:#fff;border:1px solid #a8a8a8;box-sizing:border-box;"></div>
<div class="t" style="left:535.00px;top:226.04px;font-size:11.17px;color:#111;font-weight:normal;font-family:'Liberation Sans', sans-serif;transform:scaleX(0.9200);transform-origin:0 0;">ZM_</div>
<svg class="a" style="left:667px;top:230px;" width="7" height="4" viewBox="0 0 7 4"><path d="M0 0H7L3.5 4Z" fill="#333"/></svg>
<div class="a" style="left:683px;top:220px;width:61px;height:22px;background:#fff;border:1px solid #8a8a8a;box-sizing:border-box;border-radius:2px;"></div>
<div class="t" style="left:438.40px;top:258.74px;font-size:11.17px;color:#000;font-weight:normal;font-family:'Liberation Sans', sans-serif;transform:scaleX(0.9810);transform-origin:0 0;">Replace first letters</div>
<div class="a" style="left:539px;top:252px;width:40px;height:22px;background:#fff;border:1px solid #a8a8a8;box-sizing:border-box;"></div>
<div class="t" style="left:552.28px;top:258.34px;font-size:11.17px;color:#222;font-weight:normal;font-family:'Liberation Sans', sans-serif;transform:scaleX(0.9200);transform-origin:0 0;">1</div>
<svg class="a" style="left:565.5px;top:256.0px;" width="9" height="14" viewBox="0 0 9 14"><path d="M0.5 4.2L4.5 0.2L8.5 4.2Z" fill="#333" stroke="#333" stroke-width="0.6"/><path d="M0.5 9.8L4.5 13.8L8.5 9.8Z" fill="#333" stroke="#333" stroke-width="0.6"/></svg>
<div class="t" style="left:593.50px;top:258.74px;font-size:11.17px;color:#000;font-weight:normal;font-family:'Liberation Sans', sans-serif;transform:scaleX(0.9422);transform-origin:0 0;">Technical Name length</div>
<div class="a" style="left:705px;top:252px;width:39px;height:22px;background:#f7f7f7;border:1px solid #d9d9d9;box-sizing:border-box;"></div>
<div class="t" style="left:717.28px;top:258.34px;font-size:11.17px;color:#b8b8b8;font-weight:normal;font-family:'Liberation Sans', sans-serif;transform:scaleX(0.9200);transform-origin:0 0;">9</div>
<svg class="a" style="left:730.5px;top:256.0px;" width="9" height="14" viewBox="0 0 9 14"><path d="M0.5 4.2L4.5 0.2L8.5 4.2Z" fill="#c0c0c0" stroke="#c0c0c0" stroke-width="0.6"/><path d="M0.5 9.8L4.5 13.8L8.5 9.8Z" fill="#c0c0c0" stroke="#c0c0c0" stroke-width="0.6"/></svg>
<div class="a" style="left:439px;top:289px;width:150px;height:25px;background:#fdfdfd;border:1px solid #a8a8a8;box-sizing:border-box;"></div>
<div class="t" style="left:485.10px;top:296.34px;font-size:11.17px;color:#000;font-weight:normal;font-family:'Liberation Sans', sans-serif;transform:scaleX(0.9562);transform-origin:0 0;">Apply Prefix</div>
<div class="a" style="left:594px;top:289px;width:150px;height:25px;background:#fdfdfd;border:1px solid #3c7fc8;box-sizing:border-box;"></div>
<div class="t" style="left:619.50px;top:296.34px;font-size:11.17px;color:#000;font-weight:normal;font-family:'Liberation Sans', sans-serif;transform:scaleX(0.9339);transform-origin:0 0;">Cut Technical Names</div>
<div class="a" style="left:434px;top:324px;width:622px;height:301px;background:#fff;border:1px solid #a9a9a9;box-sizing:border-box;"></div>
<div class="a" style="left:435px;top:325px;width:620px;height:19px;background:#f7f7f7;"></div>
<div class="a" style="left:435px;top:344px;width:620px;height:1px;background:#c8c8c8;"></div>
<div class="a" style="left:435px;top:345px;width:603px;height:22px;background:#fff;"></div>
<div class="a" style="left:450px;top:325px;width:1px;height:19px;background:#c8c8c8;"></div>
<div class="a" style="left:478px;top:325px;width:1px;height:19px;background:#c8c8c8;"></div>
<div class="a" style="left:513px;top:325px;width:1px;height:19px;background:#c8c8c8;"></div>
<div class="a" style="left:687px;top:325px;width:1px;height:19px;background:#c8c8c8;"></div>
<div class="a" style="left:862px;top:325px;width:1px;height:19px;background:#c8c8c8;"></div>
<div class="a" style="left:1038px;top:325px;width:1px;height:19px;background:#c8c8c8;"></div>
<div class="a" style="left:450px;top:345px;width:1px;height:22px;background:#d8d8d8;"></div>
<div class="a" style="left:478px;top:345px;width:1px;height:22px;background:#d8d8d8;"></div>
<div class="a" style="left:513px;top:345px;width:1px;height:22px;background:#d8d8d8;"></div>
<div class="a" style="left:687px;top:345px;width:1px;height:22px;background:#d8d8d8;"></div>
<div class="a" style="left:862px;top:345px;width:1px;height:22px;background:#d8d8d8;"></div>
<div class="a" style="left:1038px;top:345px;width:1px;height:22px;background:#d8d8d8;"></div>
<div class="t" style="left:482.40px;top:329.84px;font-size:11.17px;color:#333;font-weight:normal;font-family:'Liberation Sans', sans-serif;transform:scaleX(0.9944);transform-origin:0 0;">Icon</div>
<div class="t" style="left:517.40px;top:329.84px;font-size:11.17px;color:#333;font-weight:normal;font-family:'Liberation Sans', sans-serif;transform:scaleX(0.9135);transform-origin:0 0;">SAP Technical Name</div>
<div class="t" style="left:691.60px;top:329.84px;font-size:11.17px;color:#333;font-weight:normal;font-family:'Liberation Sans', sans-serif;transform:scaleX(0.9261);transform-origin:0 0;">New Technical Name</div>
<div class="t" style="left:866.50px;top:329.84px;font-size:11.17px;color:#333;font-weight:normal;font-family:'Liberation Sans', sans-serif;transform:scaleX(0.9394);transform-origin:0 0;">Description</div>
<svg class="a" style="left:439px;top:353px;" width="7" height="9" viewBox="0 0 7 9"><ellipse cx="3.5" cy="1.5" rx="3.1" ry="1.2" fill="none" stroke="#333" stroke-width="1"/><path d="M0.6 2L3.5 5.5L6.4 2Z" fill="#333"/><path d="M3.5 5V9" stroke="#333" stroke-width="1.1"/></svg>
<div class="a" style="left:450px;top:367px;width:588px;height:1px;background:#505050;"></div>
<div class="a" style="left:450px;top:369px;width:588px;height:1px;background:#505050;"></div>
<div class="a" style="left:450px;top:391px;width:588px;height:1px;background:#d8d8d8;"></div>
<div class="a" style="left:478px;top:370px;width:1px;height:21px;background:#d8d8d8;"></div>
<div class="a" style="left:513px;top:370px;width:1px;height:21px;background:#d8d8d8;"></div>
<div class="a" style="left:687px;top:370px;width:1px;height:21px;background:#d8d8d8;"></div>
<div class="a" style="left:862px;top:370px;width:1px;height:21px;background:#d8d8d8;"></div>
<svg class="a" style="left:457px;top:374px;" width="14" height="14" viewBox="0 0 14 14"><rect x="0.5" y="0.5" width="13" height="13" fill="#fff" stroke="#a2a2a2"/><path d="M3.3 6.8L6.1 9.6L10.6 4.2" fill="none" stroke="#333" stroke-width="1.6"/></svg>
<div class="t" style="left:518.30px;top:376.84px;font-size:11.17px;color:#111;font-weight:normal;font-family:'Liberation Sans', sans-serif;transform:scaleX(0.8800);transform-origin:0 0;">0AA_ACCDET</div>
<div class="t" style="left:692.20px;top:376.84px;font-size:11.17px;color:#111;font-weight:bold;font-family:'Liberation Sans', sans-serif;">ZM_AA_ACC</div>
<div class="t" style="left:866.50px;top:376.84px;font-size:11.17px;color:#111;font-weight:normal;font-family:'Liberation Sans', sans-serif;transform:scaleX(0.9800);transform-origin:0 0;">Account Determination</div>
<div class="a" style="left:450px;top:412px;width:588px;height:1px;background:#d8d8d8;"></div>
<div class="a" style="left:478px;top:391px;width:1px;height:21px;background:#d8d8d8;"></div>
<div class="a" style="left:513px;top:391px;width:1px;height:21px;background:#d8d8d8;"></div>
<div class="a" style="left:687px;top:391px;width:1px;height:21px;background:#d8d8d8;"></div>
<div class="a" style="left:862px;top:391px;width:1px;height:21px;background:#d8d8d8;"></div>
<svg class="a" style="left:457px;top:395px;" width="14" height="14" viewBox="0 0 14 14"><rect x="0.5" y="0.5" width="13" height="13" fill="#fff" stroke="#a2a2a2"/><path d="M3.3 6.8L6.1 9.6L10.6 4.2" fill="none" stroke="#333" stroke-width="1.6"/></svg>
<div class="t" style="left:518.30px;top:397.84px;font-size:11.17px;color:#111;font-weight:normal;font-family:'Liberation Sans', sans-serif;transform:scaleX(0.8800);transform-origin:0 0;">0AA_CURYRAQ</div>
<div class="t" style="left:692.20px;top:397.84px;font-size:11.17px;color:#111;font-weight:bold;font-family:'Liberation Sans', sans-serif;">ZM_AA_CUR</div>
<div class="t" style="left:866.50px;top:397.84px;font-size:11.17px;color:#111;font-weight:normal;font-family:'Liberation Sans', sans-serif;transform:scaleX(0.9800);transform-origin:0 0;">Indicator: Current-year acquisiti...</div>
<div class="a" style="left:450px;top:433px;width:588px;height:1px;background:#d8d8d8;"></div>
<div class="a" style="left:478px;top:412px;width:1px;height:21px;background:#d8d8d8;"></div>
<div class="a" style="left:513px;top:412px;width:1px;height:21px;background:#d8d8d8;"></div>
<div class="a" style="left:687px;top:412px;width:1px;height:21px;background:#d8d8d8;"></div>
<div class="a" style="left:862px;top:412px;width:1px;height:21px;background:#d8d8d8;"></div>
<svg class="a" style="left:457px;top:416px;" width="14" height="14" viewBox="0 0 14 14"><rect x="0.5" y="0.5" width="13" height="13" fill="#fff" stroke="#a2a2a2"/><path d="M3.3 6.8L6.1 9.6L10.6 4.2" fill="none" stroke="#333" stroke-width="1.6"/></svg>
<div class="t" style="left:518.30px;top:418.84px;font-size:11.17px;color:#111;font-weight:normal;font-family:'Liberation Sans', sans-serif;transform:scaleX(0.8800);transform-origin:0 0;">0AA_DEACT</div>
<div class="t" style="left:692.20px;top:418.84px;font-size:11.17px;color:#111;font-weight:bold;font-family:'Liberation Sans', sans-serif;">ZM_AA_DEA</div>
<div class="t" style="left:866.50px;top:418.84px;font-size:11.17px;color:#111;font-weight:normal;font-family:'Liberation Sans', sans-serif;transform:scaleX(0.9800);transform-origin:0 0;">Deactivation Date</div>
<div class="a" style="left:450px;top:454px;width:588px;height:1px;background:#d8d8d8;"></div>
<div class="a" style="left:478px;top:433px;width:1px;height:21px;background:#d8d8d8;"></div>
<div class="a" style="left:513px;top:433px;width:1px;height:21px;background:#d8d8d8;"></div>
<div class="a" style="left:687px;top:433px;width:1px;height:21px;background:#d8d8d8;"></div>
<div class="a" style="left:862px;top:433px;width:1px;height:21px;background:#d8d8d8;"></div>
<svg class="a" style="left:457px;top:437px;" width="14" height="14" viewBox="0 0 14 14"><rect x="0.5" y="0.5" width="13" height="13" fill="#fff" stroke="#a2a2a2"/><path d="M3.3 6.8L6.1 9.6L10.6 4.2" fill="none" stroke="#333" stroke-width="1.6"/></svg>
<div class="t" style="left:518.30px;top:439.84px;font-size:11.17px;color:#111;font-weight:normal;font-family:'Liberation Sans', sans-serif;transform:scaleX(0.8800);transform-origin:0 0;">0AA_FIRSTAQ</div>
<div class="t" style="left:692.20px;top:439.84px;font-size:11.17px;color:#111;font-weight:bold;font-family:'Liberation Sans', sans-serif;">ZM_AA_FIR</div>
<div class="t" style="left:866.50px;top:439.84px;font-size:11.17px;color:#111;font-weight:normal;font-family:'Liberation Sans', sans-serif;transform:scaleX(0.9800);transform-origin:0 0;">Asset value date of the first pos...</div>
<div class="a" style="left:450px;top:475px;width:588px;height:1px;background:#d8d8d8;"></div>
<div class="a" style="left:478px;top:454px;width:1px;height:21px;background:#d8d8d8;"></div>
<div class="a" style="left:513px;top:454px;width:1px;height:21px;background:#d8d8d8;"></div>
<div class="a" style="left:687px;top:454px;width:1px;height:21px;background:#d8d8d8;"></div>
<div class="a" style="left:862px;top:454px;width:1px;height:21px;background:#d8d8d8;"></div>
<svg class="a" style="left:457px;top:458px;" width="14" height="14" viewBox="0 0 14 14"><rect x="0.5" y="0.5" width="13" height="13" fill="#fff" stroke="#a2a2a2"/><path d="M3.3 6.8L6.1 9.6L10.6 4.2" fill="none" stroke="#333" stroke-width="1.6"/></svg>
<div class="t" style="left:518.30px;top:460.84px;font-size:11.17px;color:#111;font-weight:normal;font-family:'Liberation Sans', sans-serif;transform:scaleX(0.8800);transform-origin:0 0;">0AA_INVIND</div>
<div class="t" style="left:692.20px;top:460.84px;font-size:11.17px;color:#111;font-weight:bold;font-family:'Liberation Sans', sans-serif;">ZM_AA_INV</div>
<div class="t" style="left:866.50px;top:460.84px;font-size:11.17px;color:#111;font-weight:normal;font-family:'Liberation Sans', sans-serif;transform:scaleX(0.9800);transform-origin:0 0;">Inventory Indicator</div>
<div class="a" style="left:450px;top:496px;width:588px;height:1px;background:#d8d8d8;"></div>
<div class="a" style="left:478px;top:475px;width:1px;height:21px;background:#d8d8d8;"></div>
<div class="a" style="left:513px;top:475px;width:1px;height:21px;background:#d8d8d8;"></div>
<div class="a" style="left:687px;top:475px;width:1px;height:21px;background:#d8d8d8;"></div>
<div class="a" style="left:862px;top:475px;width:1px;height:21px;background:#d8d8d8;"></div>
<svg class="a" style="left:457px;top:479px;" width="14" height="14" viewBox="0 0 14 14"><rect x="0.5" y="0.5" width="13" height="13" fill="#fff" stroke="#a2a2a2"/><path d="M3.3 6.8L6.1 9.6L10.6 4.2" fill="none" stroke="#333" stroke-width="1.6"/></svg>
<div class="t" style="left:518.30px;top:481.84px;font-size:11.17px;color:#111;font-weight:normal;font-family:'Liberation Sans', sans-serif;transform:scaleX(0.8800);transform-origin:0 0;">0AA_SHEETCL</div>
<div class="t" style="left:692.20px;top:481.84px;font-size:11.17px;color:#111;font-weight:bold;font-family:'Liberation Sans', sans-serif;">ZM_AA_SHE</div>
<div class="t" style="left:866.50px;top:481.84px;font-size:11.17px;color:#111;font-weight:normal;font-family:'Liberation Sans', sans-serif;transform:scaleX(0.9800);transform-origin:0 0;">Classification of transaction type...</div>
<div class="a" style="left:450px;top:517px;width:588px;height:1px;background:#d8d8d8;"></div>
<div class="a" style="left:478px;top:496px;width:1px;height:21px;background:#d8d8d8;"></div>
<div class="a" style="left:513px;top:496px;width:1px;height:21px;background:#d8d8d8;"></div>
<div class="a" style="left:687px;top:496px;width:1px;height:21px;background:#d8d8d8;"></div>
<div class="a" style="left:862px;top:496px;width:1px;height:21px;background:#d8d8d8;"></div>
<svg class="a" style="left:457px;top:500px;" width="14" height="14" viewBox="0 0 14 14"><rect x="0.5" y="0.5" width="13" height="13" fill="#fff" stroke="#a2a2a2"/><path d="M3.3 6.8L6.1 9.6L10.6 4.2" fill="none" stroke="#333" stroke-width="1.6"/></svg>
<div class="t" style="left:518.30px;top:502.84px;font-size:11.17px;color:#111;font-weight:normal;font-family:'Liberation Sans', sans-serif;transform:scaleX(0.8800);transform-origin:0 0;">0AA_TTYGRP</div>
<div class="t" style="left:692.20px;top:502.84px;font-size:11.17px;color:#111;font-weight:bold;font-family:'Liberation Sans', sans-serif;">ZM_AA_TTY</div>
<div class="t" style="left:866.50px;top:502.84px;font-size:11.17px;color:#111;font-weight:normal;font-family:'Liberation Sans', sans-serif;transform:scaleX(0.9800);transform-origin:0 0;">Transaction Type Group</div>
<div class="a" style="left:450px;top:538px;width:588px;height:1px;background:#d8d8d8;"></div>
<div class="a" style="left:478px;top:517px;width:1px;height:21px;background:#d8d8d8;"></div>
<div class="a" style="left:513px;top:517px;width:1px;height:21px;background:#d8d8d8;"></div>
<div class="a" style="left:687px;top:517px;width:1px;height:21px;background:#d8d8d8;"></div>
<div class="a" style="left:862px;top:517px;width:1px;height:21px;background:#d8d8d8;"></div>
<svg class="a" style="left:457px;top:521px;" width="14" height="14" viewBox="0 0 14 14"><rect x="0.5" y="0.5" width="13" height="13" fill="#fff" stroke="#a2a2a2"/><path d="M3.3 6.8L6.1 9.6L10.6 4.2" fill="none" stroke="#333" stroke-width="1.6"/></svg>
<div class="t" style="left:518.30px;top:523.84px;font-size:11.17px;color:#111;font-weight:normal;font-family:'Liberation Sans', sans-serif;transform:scaleX(0.8800);transform-origin:0 0;">0ABCINDIC</div>
<div class="t" style="left:692.20px;top:523.84px;font-size:11.17px;color:#111;font-weight:bold;font-family:'Liberation Sans', sans-serif;">ZM_ABCIND</div>
<div class="t" style="left:866.50px;top:523.84px;font-size:11.17px;color:#111;font-weight:normal;font-family:'Liberation Sans', sans-serif;transform:scaleX(0.9800);transform-origin:0 0;">ABC indicator for technical object</div>
<div class="a" style="left:450px;top:559px;width:588px;height:1px;background:#d8d8d8;"></div>
<div class="a" style="left:478px;top:538px;width:1px;height:21px;background:#d8d8d8;"></div>
<div class="a" style="left:513px;top:538px;width:1px;height:21px;background:#d8d8d8;"></div>
<div class="a" style="left:687px;top:538px;width:1px;height:21px;background:#d8d8d8;"></div>
<div class="a" style="left:862px;top:538px;width:1px;height:21px;background:#d8d8d8;"></div>
<svg class="a" style="left:457px;top:542px;" width="14" height="14" viewBox="0 0 14 14"><rect x="0.5" y="0.5" width="13" height="13" fill="#fff" stroke="#a2a2a2"/><path d="M3.3 6.8L6.1 9.6L10.6 4.2" fill="none" stroke="#333" stroke-width="1.6"/></svg>
<div class="t" style="left:518.30px;top:544.84px;font-size:11.17px;color:#111;font-weight:normal;font-family:'Liberation Sans', sans-serif;transform:scaleX(0.8800);transform-origin:0 0;">0ABCPROCESS</div>
<div class="t" style="left:692.20px;top:544.84px;font-size:11.17px;color:#111;font-weight:bold;font-family:'Liberation Sans', sans-serif;">ZM_ABCPRO</div>
<div class="t" style="left:866.50px;top:544.84px;font-size:11.17px;color:#111;font-weight:normal;font-family:'Liberation Sans', sans-serif;transform:scaleX(0.9800);transform-origin:0 0;">Business Process Number</div>
<div class="a" style="left:450px;top:580px;width:588px;height:1px;background:#d8d8d8;"></div>
<div class="a" style="left:478px;top:559px;width:1px;height:21px;background:#d8d8d8;"></div>
<div class="a" style="left:513px;top:559px;width:1px;height:21px;background:#d8d8d8;"></div>
<div class="a" style="left:687px;top:559px;width:1px;height:21px;background:#d8d8d8;"></div>
<div class="a" style="left:862px;top:559px;width:1px;height:21px;background:#d8d8d8;"></div>
<svg class="a" style="left:457px;top:563px;" width="14" height="14" viewBox="0 0 14 14"><rect x="0.5" y="0.5" width="13" height="13" fill="#fff" stroke="#a2a2a2"/><path d="M3.3 6.8L6.1 9.6L10.6 4.2" fill="none" stroke="#333" stroke-width="1.6"/></svg>
<div class="t" style="left:518.30px;top:565.84px;font-size:11.17px;color:#111;font-weight:normal;font-family:'Liberation Sans', sans-serif;transform:scaleX(0.8800);transform-origin:0 0;">0ABC_CLASS</div>
<div class="t" style="left:692.20px;top:565.84px;font-size:11.17px;color:#111;font-weight:bold;font-family:'Liberation Sans', sans-serif;">ZM_ABC_CL</div>
<div class="t" style="left:866.50px;top:565.84px;font-size:11.17px;color:#111;font-weight:normal;font-family:'Liberation Sans', sans-serif;transform:scaleX(0.9800);transform-origin:0 0;">CLASS[ES]</div>
<div class="a" style="left:450px;top:601px;width:588px;height:1px;background:#d8d8d8;"></div>
<div class="a" style="left:478px;top:580px;width:1px;height:21px;background:#d8d8d8;"></div>
<div class="a" style="left:513px;top:580px;width:1px;height:21px;background:#d8d8d8;"></div>
<div class="a" style="left:687px;top:580px;width:1px;height:21px;background:#d8d8d8;"></div>
<div class="a" style="left:862px;top:580px;width:1px;height:21px;background:#d8d8d8;"></div>
<svg class="a" style="left:457px;top:584px;" width="14" height="14" viewBox="0 0 14 14"><rect x="0.5" y="0.5" width="13" height="13" fill="#fff" stroke="#a2a2a2"/><path d="M3.3 6.8L6.1 9.6L10.6 4.2" fill="none" stroke="#333" stroke-width="1.6"/></svg>
<div class="t" style="left:518.30px;top:586.84px;font-size:11.17px;color:#111;font-weight:normal;font-family:'Liberation Sans', sans-serif;transform:scaleX(0.8800);transform-origin:0 0;">0AB_POSNR_L</div>
<div class="t" style="left:692.20px;top:586.84px;font-size:11.17px;color:#111;font-weight:bold;font-family:'Liberation Sans', sans-serif;">ZM_AB_POS</div>
<div class="t" style="left:866.50px;top:586.84px;font-size:11.17px;color:#111;font-weight:normal;font-family:'Liberation Sans', sans-serif;transform:scaleX(0.9800);transform-origin:0 0;">List Item</div>
<div class="a" style="left:450px;top:370px;width:1px;height:231px;background:#d8d8d8;"></div>
<div class="a" style="left:450px;top:370px;width:588px;height:1px;background:#d8d8d8;"></div>
<svg class="a" style="left:441px;top:377px;" width="4" height="8" viewBox="0 0 4 8"><path d="M0 0L4 4L0 8Z" fill="#333"/></svg>
<div class="a" style="left:1038px;top:370px;width:17px;height:254px;background:#f0f0f0;"></div>
<div class="a" style="left:1039px;top:372px;width:15px;height:15px;background:#f7f7f7;border:1px solid #d9d9d9;box-sizing:border-box;"></div>
<svg class="a" style="left:1042px;top:377px;" width="9" height="5" viewBox="0 0 9 5"><path d="M0 5H9L4.5 0Z" fill="#c0c0c0"/></svg>
<div class="a" style="left:1039px;top:607px;width:15px;height:15px;background:#f7f7f7;border:1px solid #d9d9d9;box-sizing:border-box;"></div>
<svg class="a" style="left:1042px;top:612px;" width="9" height="5" viewBox="0 0 9 5"><path d="M0 0H9L4.5 5Z" fill="#c0c0c0"/></svg>
<div class="a" style="left:428px;top:635px;width:634px;height:137px;border:1px solid #a9a9a9;box-sizing:border-box;"></div>
<div class="t" style="left:437.50px;top:643.27px;font-size:18.78px;color:#8c8c8c;font-weight:bold;font-family:'Liberation Serif', serif;transform:scaleX(1.0104);transform-origin:0 0;">Data Adjustments</div>
<svg class="a" style="left:1041px;top:649px;" width="8" height="9" viewBox="0 0 8 9"><path d="M1.5 0.5H5.5V5.5H1.5Z" fill="none" stroke="#333" stroke-width="1"/><rect x="3.5" y="0.5" width="2" height="5" fill="#333"/><path d="M0 5.5H7M3.5 5.5V8" stroke="#333" stroke-width="1"/></svg>
<div class="t" style="left:438.50px;top:677.54px;font-size:11.17px;color:#000;font-weight:normal;font-family:'Liberation Sans', sans-serif;transform:scaleX(0.9649);transform-origin:0 0;">Level of dependency</div>
<div class="a" style="left:544px;top:673px;width:40px;height:19px;background:#fff;border:1px solid #a8a8a8;box-sizing:border-box;"></div>
<div class="t" style="left:557.28px;top:677.84px;font-size:11.17px;color:#222;font-weight:normal;font-family:'Liberation Sans', sans-serif;transform:scaleX(0.9200);transform-origin:0 0;">0</div>
<svg class="a" style="left:570.5px;top:676.3px;" width="9" height="12.4" viewBox="0 0 9 12.4"><path d="M0.5 4.2L4.5 0.2L8.5 4.2Z" fill="#333" stroke="#333" stroke-width="0.6"/><path d="M0.5 8.2L4.5 12.200000000000001L8.5 8.2Z" fill="#333" stroke="#333" stroke-width="0.6"/></svg>
<div class="t" style="left:588.40px;top:677.54px;font-size:11.17px;color:#000;font-weight:normal;font-family:'Liberation Sans', sans-serif;transform:scaleX(0.9757);transform-origin:0 0;">(0 means infinity)</div>
<div class="t" style="left:438.50px;top:701.54px;font-size:11.17px;color:#000;font-weight:normal;font-family:'Liberation Sans', sans-serif;transform:scaleX(0.9728);transform-origin:0 0;">Import as</div>
<div class="a" style="left:490px;top:698px;width:250px;height:19px;background:#fff;border:1px solid #a8a8a8;box-sizing:border-box;"></div>
<div class="t" style="left:494.30px;top:701.54px;font-size:11.17px;color:#111;font-weight:normal;font-family:'Liberation Sans', sans-serif;transform:scaleX(0.9662);transform-origin:0 0;">BW/4HANA object types</div>
<svg class="a" style="left:727.5px;top:705px;" width="7" height="4" viewBox="0 0 7 4"><path d="M0 0H7L3.5 4Z" fill="#333"/></svg>
<div class="t" style="left:440.00px;top:743.54px;font-size:11.17px;color:#000;font-weight:normal;font-family:'Liberation Sans', sans-serif;transform:scaleX(0.9760);transform-origin:0 0;">10 object(s) to be imported</div>
<div class="a" style="left:741px;top:736px;width:150px;height:25px;background:#fdfdfd;border:1px solid #a8a8a8;box-sizing:border-box;"></div>
<div class="t" style="left:786.50px;top:743.54px;font-size:11.17px;color:#000;font-weight:normal;font-family:'Liberation Sans', sans-serif;transform:scaleX(1.0058);transform-origin:0 0;">Start Import</div>
<div class="a" style="left:896px;top:736px;width:150px;height:25px;background:#f7f7f7;border:1px solid #d9d9d9;box-sizing:border-box;"></div>
<div class="t" style="left:919.70px;top:743.54px;font-size:11.17px;color:#b0b0b0;font-weight:normal;font-family:'Liberation Sans', sans-serif;transform:scaleX(0.9578);transform-origin:0 0;">Show Import Protocol</div>
<div class="a" style="left:1px;top:775px;width:1064px;height:1px;background:#6a6a6a;"></div>
<div class="a" style="left:1px;top:776px;width:1064px;height:1px;background:#b8b8b8;"></div>
<div class="a" style="left:1064px;top:776px;width:1px;height:29px;background:#a0a0a0;"></div>
<div class="t" style="left:5.00px;top:784.54px;font-size:11.17px;color:#000;font-weight:normal;font-family:'Liberation Sans', sans-serif;transform:scaleX(0.9751);transform-origin:0 0;">Active Project</div>
<div class="a" style="left:78px;top:779px;width:150px;height:20px;background:#fff;border:1px solid #a8a8a8;box-sizing:border-box;"></div>
<div class="t" style="left:82.00px;top:784.04px;font-size:11.17px;color:#111;font-weight:normal;font-family:'Liberation Sans', sans-serif;transform:scaleX(0.9200);transform-origin:0 0;">P01</div>
<svg class="a" style="left:217px;top:788px;" width="6" height="3.5" viewBox="0 0 6 3.5"><path d="M0 0H6L3 3.5Z" fill="#888"/></svg>
<div class="a" style="left:794px;top:778px;width:27px;height:24px;background:#fdfdfd;border:1px solid #a8a8a8;box-sizing:border-box;"></div>
<div class="a" style="left:827px;top:778px;width:27px;height:24px;background:#fdfdfd;border:1px solid #a8a8a8;box-sizing:border-box;"></div>
<div class="t" style="left:880.20px;top:784.04px;font-size:11.17px;color:#000;font-weight:normal;font-family:'Liberation Sans', sans-serif;transform:scaleX(0.9017);transform-origin:0 0;">SQLite</div>
<div class="t" style="left:938.60px;top:784.04px;font-size:11.17px;color:#000;font-weight:normal;font-family:'Liberation Sans', sans-serif;transform:scaleX(0.9477);transform-origin:0 0;">Admin (Full administrator)</div>
<div class="a" style="left:1064px;top:174px;width:1px;height:601px;background:#d4d4d4;"></div>
<div class="a" style="left:0px;top:0px;width:1px;height:807px;background:#1565c0;"></div>
<div class="a" style="left:1065px;top:0px;width:1px;height:807px;background:#1565c0;"></div>
<div class="a" style="left:0px;top:0px;width:1066px;height:1px;background:#1565c0;"></div>
<div class="a" style="left:0px;top:805px;width:1066px;height:2px;background:#1565c0;"></div>
<svg class="a" style="left:38px;top:424px;clip-path:inset(0 0 0px 0)" width="16" height="16"><use href="#rowi" width="16" height="16"/></svg>
<svg class="a" style="left:38px;top:444px;clip-path:inset(0 0 0px 0)" width="16" height="16"><use href="#rowi" width="16" height="16"/></svg>
<svg class="a" style="left:38px;top:464px;clip-path:inset(0 0 0px 0)" width="16" height="16"><use href="#rowi" width="16" height="16"/></svg>
<svg class="a" style="left:38px;top:484px;clip-path:inset(0 0 0px 0)" width="16" height="16"><use href="#rowi" width="16" height="16"/></svg>
<svg class="a" style="left:38px;top:504px;clip-path:inset(0 0 0px 0)" width="16" height="16"><use href="#rowi" width="16" height="16"/></svg>
<svg class="a" style="left:38px;top:524px;clip-path:inset(0 0 0px 0)" width="16" height="16"><use href="#rowi" width="16" height="16"/></svg>
<svg class="a" style="left:38px;top:544px;clip-path:inset(0 0 0px 0)" width="16" height="16"><use href="#rowi" width="16" height="16"/></svg>
<svg class="a" style="left:38px;top:564px;clip-path:inset(0 0 0px 0)" width="16" height="16"><use href="#rowi" width="16" height="16"/></svg>
<svg class="a" style="left:38px;top:584px;clip-path:inset(0 0 0px 0)" width="16" height="16"><use href="#rowi" width="16" height="16"/></svg>
<svg class="a" style="left:38px;top:604px;clip-path:inset(0 0 0px 0)" width="16" height="16"><use href="#rowi" width="16" height="16"/></svg>
<svg class="a" style="left:38px;top:624px;clip-path:inset(0 0 0px 0)" width="16" height="16"><use href="#rowi" width="16" height="16"/></svg>
<svg class="a" style="left:38px;top:644px;clip-path:inset(0 0 0px 0)" width="16" height="16"><use href="#rowi" width="16" height="16"/></svg>
<svg class="a" style="left:38px;top:664px;clip-path:inset(0 0 0px 0)" width="16" height="16"><use href="#rowi" width="16" height="16"/></svg>
<svg class="a" style="left:38px;top:684px;clip-path:inset(0 0 0px 0)" width="16" height="16"><use href="#rowi" width="16" height="16"/></svg>
<svg class="a" style="left:38px;top:704px;clip-path:inset(0 0 0px 0)" width="16" height="16"><use href="#rowi" width="16" height="16"/></svg>
<svg class="a" style="left:38px;top:724px;clip-path:inset(0 0 2px 0)" width="16" height="16"><use href="#rowi" width="16" height="16"/></svg>
<svg class="a" style="left:489px;top:373px" width="16" height="16"><use href="#rowi" width="16" height="16"/></svg>
<svg class="a" style="left:489px;top:394px" width="16" height="16"><use href="#rowi" width="16" height="16"/></svg>
<svg class="a" style="left:489px;top:415px" width="16" height="16"><use href="#rowi" width="16" height="16"/></svg>
<svg class="a" style="left:489px;top:436px" width="16" height="16"><use href="#rowi" width="16" height="16"/></svg>
<svg class="a" style="left:489px;top:457px" width="16" height="16"><use href="#rowi" width="16" height="16"/></svg>
<svg class="a" style="left:489px;top:478px" width="16" height="16"><use href="#rowi" width="16" height="16"/></svg>
<svg class="a" style="left:489px;top:499px" width="16" height="16"><use href="#rowi" width="16" height="16"/></svg>
<svg class="a" style="left:489px;top:520px" width="16" height="16"><use href="#rowi" width="16" height="16"/></svg>
<svg class="a" style="left:489px;top:541px" width="16" height="16"><use href="#rowi" width="16" height="16"/></svg>
<svg class="a" style="left:489px;top:562px" width="16" height="16"><use href="#rowi" width="16" height="16"/></svg>
<svg class="a" style="left:489px;top:583px" width="16" height="16"><use href="#rowi" width="16" height="16"/></svg>
<svg class="a" style="left:73px;top:298px;" width="16" height="16" viewBox="0 0 16 16"><path d="M1.2 4.2C2 2.5 3.5 1.3 5.2 1L9 4L8 12.5C5.5 12 3 11 1.2 10Z" fill="#f8f2c8" stroke="#8aa4d4" stroke-width="0.9"/><path d="M3 4.5L6.5 3.5M3 6.5L7 5.5" stroke="#e8d040" stroke-width="1.2"/><use href="#cylb" x="4" y="8" width="12" height="8.6"/><use href="#tri" x="7" y="1" width="9" height="9"/></svg>
<svg class="a" style="left:116px;top:298px;" width="16" height="16" viewBox="0 0 16 16"><path d="M0.5 5.5L9 8V15.5L0.5 12.5Z" fill="#c9d8ea" stroke="#4a6aa0" stroke-width="0.9"/><path d="M9 8L14.5 4V11.5L9 15.5Z" fill="#7a88c0" stroke="#4a6aa0" stroke-width="0.9"/><path d="M6 1L14.5 4L9 8L0.5 5.5Z" fill="#f2dc50" stroke="#4a6aa0" stroke-width="0.9"/><path d="M3.5 3.3L11.8 6M8.8 1.9L4.8 6.8M11.6 2.9L7.2 7.4" stroke="#fff8d0" stroke-width="0.8"/></svg>
<svg class="a" style="left:158px;top:298px;" width="16" height="16" viewBox="0 0 16 16"><use href="#cylb" x="0.5" y="5" width="14" height="10"/><path d="M7 1L15 1L14 7L7 9Z" fill="#3a78d6" stroke="#2a5fb0" stroke-width="0.8"/></svg>
<svg class="a" style="left:200px;top:298px;" width="16" height="16" viewBox="0 0 16 16"><use href="#cyly" x="5" y="0.5" width="10.5" height="15"/><g fill="#3b78d6" stroke="#fff" stroke-width="0.7"><rect x="0.5" y="5" width="4" height="3.4"/><rect x="4.8" y="5" width="4" height="3.4"/><rect x="0.5" y="8.6" width="4" height="3.4"/><rect x="4.8" y="8.6" width="4" height="3.4"/><rect x="0.5" y="12.2" width="4" height="3.4"/><rect x="4.8" y="12.2" width="4" height="3.4"/></g></svg>
<svg class="a" style="left:242px;top:302px;" width="16" height="12" viewBox="0 0 16 12"><use href="#cylb" width="16" height="12"/></svg>
<svg class="a" style="left:284px;top:298px" width="16" height="16"><use href="#rowo" width="16" height="16"/></svg>
<svg class="a" style="left:326px;top:298px;" width="16" height="16" viewBox="0 0 16 16"><use href="#tri" x="0.5" y="5" width="10.5" height="10.5"/><circle cx="11.5" cy="4.5" r="3.8" fill="#f4f7ff" stroke="#6a86c8" stroke-width="0.9"/><path d="M11.5 2.5V4.5H13" fill="none" stroke="#6a86c8" stroke-width="0.8"/></svg>
<svg class="a" style="left:73px;top:319px" width="16" height="16"><use href="#rowi" width="16" height="16"/></svg>
<svg class="a" style="left:116px;top:319px;" width="16" height="16" viewBox="0 0 16 16"><use href="#tri" x="0.5" y="4" width="11" height="11.5"/><text x="9.5" y="9" font-family="Liberation Sans" font-size="10" fill="#2a4a7a">$</text></svg>
<svg class="a" style="left:48px;top:66px;" width="14" height="11" viewBox="0 0 14 11"><use href="#cylb" width="14" height="11"/></svg>
<svg class="a" style="left:38px;top:80px" width="16" height="16"><use href="#rowi" width="16" height="16"/></svg>
<svg class="a" style="left:56px;top:80px;" width="16" height="16" viewBox="0 0 16 16"><rect x="5.5" y="0.5" width="9" height="9" fill="url(#gCell)" stroke="#c7a35e"/><rect x="9.5" y="5.5" width="5" height="5" fill="#fff2c0" stroke="#d08c10"/><use href="#tri" x="0" y="4" width="11" height="11.5"/><text x="0" y="9.5" font-family="Liberation Serif" font-style="italic" font-weight="bold" font-size="10" fill="#1a4ee8">fx</text></svg>
<svg class="a" style="left:130px;top:62px;" width="40" height="36" viewBox="0 0 40 36"><g fill="#2ea0ff" stroke="#707070"><rect x="18.5" y="5.5" width="6" height="4"/><rect x="10.5" y="17.5" width="6" height="4"/><rect x="26.5" y="17.5" width="6" height="4"/><rect x="6.5" y="27.5" width="6" height="4"/><rect x="14.5" y="27.5" width="6" height="4"/><rect x="22.5" y="27.5" width="6" height="4"/><rect x="30.5" y="27.5" width="6" height="4"/></g><path d="M21.5 10L13.5 17M21.5 10L29.5 17M13.5 22L9.5 27M13.5 22L17.5 27M29.5 22L25.5 27M29.5 22L33.5 27" stroke="#707070" stroke-width="0.9"/></svg>
<svg class="a" style="left:218px;top:62px;" width="40" height="36" viewBox="0 0 40 36"><use href="#sap" width="40" height="36"/><path d="M12 18.75L13 8L16.5 10.5C19 6.5 24 5.5 31.25 8.3C25 8.5 21.5 10.5 20.5 13.5L23 16.5Z" fill="#d60000"/></svg>
<svg class="a" style="left:296px;top:62px;" width="40" height="36" viewBox="0 0 40 36"><use href="#sap" width="40" height="36"/><path d="M32.6 10.9L23.2 4L23.2 8.5C18 8.5 13.5 11 12 18.75C14.5 14.5 18 13.2 23.2 13.5L23.2 17.6Z" fill="#1bbf1b"/></svg>
<svg class="a" style="left:394px;top:62px;" width="40" height="36" viewBox="0 0 40 36"><rect x="6.8" y="5.7" width="26.6" height="26.6" fill="#f3f8ff" stroke="#5b9bd5" stroke-width="1.4"/><rect x="10" y="9.8" width="1.4" height="1.4" fill="#22337a"/><path d="M13.2 10.5H19M22.1 10.5H28.1" stroke="#22337a" stroke-width="1.3"/><rect x="10" y="12.8" width="1.4" height="1.4" fill="#22337a"/><path d="M13.2 13.5H19M22.1 13.5H28.1" stroke="#22337a" stroke-width="1.3"/><rect x="10" y="15.8" width="1.4" height="1.4" fill="#22337a"/><path d="M13.2 16.5H19M22.1 16.5H28.1" stroke="#22337a" stroke-width="1.3"/><rect x="10" y="18.8" width="1.4" height="1.4" fill="#22337a"/><path d="M13.2 19.5H19M22.1 19.5H28.1" stroke="#22337a" stroke-width="1.3"/><rect x="10" y="21.8" width="1.4" height="1.4" fill="#22337a"/><path d="M13.2 22.5H19M22.1 22.5H28.1" stroke="#22337a" stroke-width="1.3"/><rect x="10" y="24.7" width="1.4" height="1.4" fill="#22337a"/><path d="M13.2 25.4H19M22.1 25.4H28.1" stroke="#22337a" stroke-width="1.3"/><rect x="10" y="27.7" width="1.4" height="1.4" fill="#22337a"/><path d="M13.2 28.4H19M22.1 28.4H28.1" stroke="#22337a" stroke-width="1.3"/><path d="M18 23.5L23 28.3L32.3 19.5" fill="none" stroke="#2a9a2a" stroke-width="3.2" stroke-linejoin="round"/><path d="M18.5 23.2L23 27.3L31.5 19.3" fill="none" stroke="#7ad36a" stroke-width="1"/></svg>
<svg class="a" style="left:496px;top:62px;" width="40" height="36" viewBox="0 0 40 36"><use href="#tblcyl" x="4" y="3" width="20" height="20"/><use href="#tblcyl" x="17" y="15.2" width="20" height="20"/></svg>
<svg class="a" style="left:570px;top:62px;" width="40" height="36" viewBox="0 0 40 36"><use href="#tblcyl" x="4" y="3" width="20" height="20"/><path d="M21 15.5H30L35.5 21V34.2H21Z" fill="#fff" stroke="#777" stroke-width="1"/><path d="M30 15.5V21H35.5" fill="#eee" stroke="#777"/><path d="M28.6 24.5H34.8M28.6 26.8H34.8M28.6 29.5H34.8" stroke="#5a9ad8" stroke-width="1.2"/><rect x="16.5" y="19.5" width="10.5" height="11" fill="#14233a" stroke="#e0a83a"/><circle cx="21.75" cy="25" r="3.3" fill="none" stroke="#e8a93a" stroke-width="1.5"/></svg>
<svg class="a" style="left:672px;top:62px;" width="40" height="36" viewBox="0 0 40 36"><path d="M8.5 13V9C8.5 7 9.5 6.3 11.5 6.3H17" fill="none" stroke="#2e8b57" stroke-width="2"/><path d="M16 2.5L22 6.3L16 10Z" fill="#2e8b57"/><path d="M8.5 24V29.5C8.5 31 9.5 31.5 11.5 31.5H17" fill="none" stroke="#2e8b57" stroke-width="2"/><path d="M16 27.5L22 31.5L16 35Z" fill="#2e8b57"/><use href="#rowi" x="20" y="3" width="16" height="16"/><use href="#rowo" x="20" y="20" width="16" height="16"/><path d="M4.6 13.6H11L13.4 16V21.4H12.4V24.4H9.2V21.4H4.6Z" fill="#f7cf3a" stroke="#000" stroke-width="1.3"/><rect x="5.4" y="14.3" width="1.5" height="6.6" fill="#fff"/><path d="M9.3 23V21.5" stroke="#fff" stroke-width="1"/><path d="M10.6 15.2L15.6 10.6L19.8 13.2L14.2 19.2L12 18Z" fill="#eef4ff" stroke="#000" stroke-width="1.2"/><path d="M13.6 15L16 12.6M14.8 15.8L17.2 13.4" stroke="#1a5ad0" stroke-width="0.9"/><path d="M15 18.3L19 14" stroke="#1a7ad8" stroke-width="1.1" stroke-dasharray="1 0.6"/></svg>
<svg class="a" style="left:774px;top:62px;" width="40" height="36" viewBox="0 0 40 36"><rect x="5.8" y="6.6" width="28.6" height="22.6" fill="#fff" stroke="#a2a2a2" stroke-width="1.5"/><path d="M6.5 29.9H34.5" stroke="#c8c8c8" stroke-width="1"/><rect x="7.3" y="8" width="25.6" height="3.8" fill="#e2e3e5"/><rect x="8.6" y="13.5" width="23" height="9" fill="#fff" stroke="#1a7fd0" stroke-width="1.4"/><rect x="10.2" y="15.8" width="7.7" height="3.8" fill="#3f97da"/><rect x="20.5" y="15.2" width="9.5" height="3" fill="#e6e6e6"/><path d="M19.4 11.4V24.6M17.2 11.4H21.8M17.2 24.6H21.8" stroke="#444" stroke-width="1.2"/></svg>
<svg class="a" style="left:836px;top:62px;" width="40" height="36" viewBox="0 0 40 36"><rect x="5.8" y="6.6" width="28.6" height="22.6" fill="#fff" stroke="#a2a2a2" stroke-width="1.5"/><path d="M6.5 29.9H34.5" stroke="#c8c8c8" stroke-width="1"/><rect x="7.3" y="8" width="25.6" height="3.8" fill="#e2e3e5"/><rect x="8.6" y="13.5" width="23" height="9" fill="#fff" stroke="#1a7fd0" stroke-width="1.4"/><rect x="10.2" y="15.8" width="7.7" height="3.8" fill="#3f97da"/><rect x="20.5" y="15.2" width="9.5" height="3" fill="#e6e6e6"/><path d="M19.4 11.4V24.6M17.2 11.4H21.8M17.2 24.6H21.8" stroke="#444" stroke-width="1.2"/><path d="M16.7 17H23.3L28 21.7V28.3L23.3 33H16.7L12 28.3V21.7Z" fill="#e81c1c" stroke="#c00" stroke-width="0.8"/><path d="M15 24.5V21.5C15 20.5 16.5 20.5 16.5 21.5V20C16.5 19 18 19 18 20V19.5C18 18.5 19.5 18.5 19.5 19.5V20C19.5 19 21 19 21 20V22C21.5 21.5 22.8 21.8 22.5 23L21.5 27.5C21 29.5 20 30.5 18.5 30.5H17.5C16 30.5 15 29.5 15 28Z" fill="#fff"/></svg>
<svg class="a" style="left:909px;top:62px;" width="40" height="36" viewBox="0 0 40 36"><g opacity="0.9"><rect x="13" y="6.5" width="9" height="9" fill="#d8d8d8" stroke="#777"/><rect x="13.5" y="7" width="8" height="3" fill="#6a6a6a"/><path d="M8.3 20.5L13 7L17.9 20.5Z" fill="url(#gGr)" stroke="#444" stroke-width="0.9"/><rect x="23" y="16" width="9" height="9" fill="#d8d8d8" stroke="#777"/><rect x="27" y="21" width="5" height="5" fill="#ddd" stroke="#666"/><path d="M18.3 30.6L23 20L27.9 30.6Z" fill="url(#gGr)" stroke="#444" stroke-width="0.9"/></g><circle cx="20.1" cy="18.75" r="14.6" fill="none" stroke="#e61010" stroke-width="3"/><path d="M29.5 8.5L10.5 28" stroke="#e61010" stroke-width="3"/></svg>
<svg class="a" style="left:800px;top:782px;" width="14" height="16" viewBox="0 0 14 16"><path d="M1.5 0.5H9L12.5 4V15.5H1.5Z" fill="#f8f8f8" stroke="#999"/><path d="M3 4H8M3 6.5H10M3 9H10M3 11.5H10M3 14H10" stroke="#bbb" stroke-width="0.8"/><path d="M7.5 7.5L9 9L12 6M7.5 12L9 13.5L12 10.5" fill="none" stroke="#2a8ad8" stroke-width="1.2"/></svg>
<svg class="a" style="left:834px;top:784px;" width="13" height="13" viewBox="0 0 13 13"><path d="M2 6C2 3 4.5 1.5 7 1.5C8.5 1.5 10 2.2 10.8 3.3" fill="none" stroke="#1a7fd8" stroke-width="2"/><path d="M8.5 1.5L12 1L11.5 5Z" fill="#1a7fd8"/><path d="M11 7C11 10 8.5 11.5 6 11.5C4.5 11.5 3 10.8 2.2 9.7" fill="none" stroke="#1a7fd8" stroke-width="2"/><path d="M4.5 11.5L1 12L1.5 8Z" fill="#1a7fd8"/></svg>
<svg class="a" style="left:862px;top:781px;" width="17" height="16" viewBox="0 0 17 16"><path d="M0.5 2.5V11C0.5 12.5 3 13.5 6.5 13.5S12.5 12.5 12.5 11V2.5" fill="#c8c8c8" stroke="#888"/><ellipse cx="6.5" cy="2.5" rx="6" ry="2" fill="#e8e8e8" stroke="#888"/><path d="M0.5 6.5C0.5 8 3 9 6.5 9S12.5 8 12.5 6.5" fill="none" stroke="#888"/><rect x="6.5" y="5.5" width="10" height="10" fill="#2a7fd0" stroke="#1a5fa8"/><rect x="8.5" y="6" width="6" height="3.5" fill="#fff"/><rect x="9.5" y="11.5" width="4" height="4" fill="#e8f2ff"/></svg>
<svg class="a" style="left:921px;top:781px;" width="15" height="16" viewBox="0 0 15 16"><path d="M1 15.5C1 11.5 3.5 10 7.5 10S14 11.5 14 15.5Z" fill="#a8bde8" stroke="#2a3f8a"/><circle cx="7.5" cy="6" r="3.8" fill="#fbd8b0" stroke="#7a5030" stroke-width="0.8"/><path d="M3.7 5.5C3.7 2.5 5.5 1.5 7.5 1.5S11.3 2.5 11.3 5C10 4 8.5 3.5 6 4Z" fill="#b8782a"/></svg>
</body></html>
